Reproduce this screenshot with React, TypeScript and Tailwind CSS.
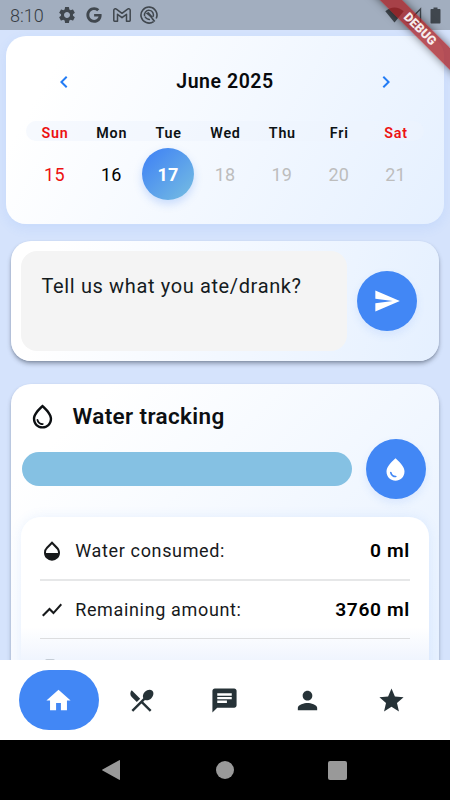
import React from "react";
import {
  MdSettings, MdChevronLeft, MdChevronRight, MdSend, MdOpacity, MdShowChart, MdHome,
  MdRestaurantMenu, MdChat, MdPerson, MdStar, MdOutlineWaterDrop, MdWaterDrop,
} from "react-icons/md";
import { FaGoogle } from "react-icons/fa";

const days = [
  { name: "Sun", date: 15, nameClass: "text-[#ec1212]", dateClass: "text-[#ec1212]" },
  { name: "Mon", date: 16, nameClass: "text-[#0c1214]", dateClass: "text-black" },
  { name: "Tue", date: 17, nameClass: "text-[#0c1214]", dateClass: "text-white font-bold" },
  { name: "Wed", date: 18, nameClass: "text-[#0c1214]", dateClass: "text-[#bdbdbd]" },
  { name: "Thu", date: 19, nameClass: "text-[#0c1214]", dateClass: "text-[#bdbdbd]" },
  { name: "Fri", date: 20, nameClass: "text-[#0c1214]", dateClass: "text-[#bdbdbd]" },
  { name: "Sat", date: 21, nameClass: "text-[#ec1212]", dateClass: "text-[#bdbdbd]" },
];

function StatusBar() {
  return (
    <div className="flex h-[30px] shrink-0 items-center bg-[#a2aebf] pl-[10px] pr-[8px] text-[#40474e]">
      <span className="w-[48px] pt-[2px] text-[18px] font-light leading-[30px] text-[#363c43]">8:10</span>
      <MdSettings size={20} className="-ml-[1px]" />
      <FaGoogle size={16} className="ml-[9px]" />
      <svg width="18" height="14" viewBox="0 0 18 14" className="ml-[11px]" fill="none" stroke="currentColor" strokeWidth="1.500" strokeLinejoin="round">
        <path d="M.8 2.3C.8.8 2.4.3 3.4 1.1L9 5.300l5.600-4.200c1-.8 2.600-.3 2.600 1.200v10.200c0 .4-.3.7-.7.7h-3V6.300L9 9.700 4.500 6.300v6.900h-3c-.4 0-.7-.3-.7-.7z" />
      </svg>
      <svg width="18" height="18" viewBox="0 0 18 18" className="ml-[9px]" fill="none" stroke="currentColor">
        <path d="M13.600 15.600A8 8 0 1 1 16.200 12.500" strokeWidth="1.600" />
        <path d="M4.600 10A4.500 4.500 0 1 1 12.900 11" strokeWidth="1.500" />
        <path d="M5.700 7.300 8.600 6.100l4.200 4.600-.8 2.200-2.900-2.800z" fill="currentColor" stroke="none" />
        <path d="M4.800 10.500Q6.500 13.500 10 13.600" strokeWidth="1.400" />
        <path d="m12 12.300 2.700 3.200" strokeWidth="1.700" />
      </svg>
      <div className="ml-auto flex items-center">
        <svg width="19" height="16" viewBox="0 0 19 16" fill="currentColor">
          <path d="M.3 4.300C5.500-.8 13.500-.8 18.700 4.300L9.500 15.500z" />
        </svg>
        <svg width="17" height="17" viewBox="0 0 17 17" className="ml-[2px]" fill="none" stroke="currentColor" strokeWidth="1.400">
          <path d="M14.500 2v13H1.800z" />
        </svg>
        <svg width="11" height="17" viewBox="0 0 11 17" className="ml-[7px] mr-[1px]" fill="currentColor">
          <path d="M3.500.4h4v1.700h2c.6 0 1 .4 1 1v12.400c0 .6-.4 1-1 1h-8c-.6 0-1-.4-1-1V3.100c0-.6.4-1 1-1h2z" />
        </svg>
      </div>
    </div>
  );
}

function Calendar() {
  return (
    <section className="mx-[6px] mt-[6px] h-[188px] shrink-0 rounded-[20px] bg-[linear-gradient(120deg,#ffffff_0%,#ffffff_12%,#e5f0ff_100%)] px-[20px] shadow-[0_4px_12px_rgba(66,133,244,0.10)]">
      <div className="flex h-[85px] items-center justify-between pl-[26px] pr-[26px] pt-[6px]">
        <MdChevronLeft size={24} className="text-[#237cf5]" />
        <h1 className="text-[19.500px] font-semibold tracking-[0.550px] text-[#080a0d]">June 2025</h1>
        <MdChevronRight size={24} className="text-[#237cf5]" />
      </div>
      <div className="grid h-[20px] grid-cols-7 items-center rounded-[10px] bg-[#edf4fe]/50">
        {days.map((d) => (
          <span key={d.name} className={"pl-px pt-[3px] text-center text-[14.300px] font-semibold leading-[19px] tracking-[0.750px] " + d.nameClass}>{d.name}</span>
        ))}
      </div>
      <div className="mt-[7px] grid grid-cols-7 justify-items-center">
        {days.map((d) => (
          <span
            key={d.date}
            className={
              "flex size-[52px] items-center justify-center rounded-full text-[18px] tracking-[0.2px] " + d.dateClass +
              (d.date === 17 ? " bg-[linear-gradient(135deg,#4285f4_10%,#74bbe2_95%)] shadow-[0_4px_8px_rgba(66,133,244,0.25)]" : "")
            }
          >
            {d.date}
          </span>
        ))}
      </div>
    </section>
  );
}

function MealInput() {
  return (
    <section className="mx-[11px] mt-[17px] flex h-[120px] shrink-0 items-center rounded-[20px] bg-[linear-gradient(105deg,#ffffff_10%,#e5f0ff_100%)] pl-[10px] shadow-[0_3px_4px_rgba(50,60,80,0.38),0_1px_2px_rgba(50,60,80,0.2)]">
      <div className="h-[100px] w-[326px] rounded-[16px] bg-[#f4f4f4] px-[20.500px] pt-[22px]">
        <span className="whitespace-nowrap text-[20px] leading-[26px] tracking-[0.630px] text-[#151b1e]">Tell us what you ate/drank?</span>
      </div>
      <button className="ml-[10.400px] flex size-[60px] items-center justify-center rounded-full bg-[#4287f5] text-white shadow-[0_4px_8px_rgba(66,133,244,0.12)]">
        <MdSend size={28} />
      </button>
    </section>
  );
}

function WaterCard() {
  return (
    <section className="mx-[11px] mt-[23px] h-[400px] shrink-0 rounded-[20px] bg-[linear-gradient(135deg,#ffffff_12%,#e5f0ff_90%)] px-[10px] shadow-[0_3px_4px_rgba(50,60,80,0.30),0_1px_2px_rgba(50,60,80,0.15)]">
      <div className="flex h-[55px] items-center pl-[7px] pt-[9px] text-[#0c0f12]">
        <MdOutlineWaterDrop size={29} />
        <h2 className="ml-[15.500px] pt-[2px] text-[22.500px] font-semibold tracking-[0.360px]">Water tracking</h2>
      </div>
      <div className="flex items-center">
        <div className="ml-px h-[34px] w-[330px] rounded-full bg-[#85c1e3]" />
        <button className="ml-[13.600px] flex size-[60px] items-center justify-center rounded-full bg-[#4287f5] text-white shadow-[0_4px_8px_rgba(66,133,244,0.12)]">
          <MdWaterDrop size={27} />
        </button>
      </div>
      <div className="mt-[18px] h-[250px] rounded-[20px] bg-[linear-gradient(#ffffff_0px,#ffffff_110px,#f0f5fe_143px)] px-[19px] pt-[5px] shadow-[0_0_12px_rgba(66,133,244,0.10)]">
        <div className="h-[59px] border-b-2 border-[#e6e7e8]">
          <Stat icon={<MdOpacity size={24} />} label="Water consumed:" value="0 ml" />
        </div>
        <div className="h-[58px] border-b border-[#dcdddf]">
          <Stat icon={<MdShowChart size={24} />} label="Remaining amount:" value="3760 ml" />
        </div>
        <div className="ml-[5px] mt-[20px] h-[20px] w-[10px] rounded-[2px] bg-[#c5cdd6]" />
      </div>
    </section>
  );
}

function Stat({ icon, label, value }: { icon: React.ReactNode; label: string; value: string }) {
  return (
    <div className="flex h-full items-center pt-px text-[#17191b]">
      {icon}
      <span className="-mt-px ml-[11.200px] text-[18px] tracking-[0.650px]">{label}</span>
      <span className="ml-auto pt-px text-[19.200px] font-semibold tracking-[0.650px] text-black">{value}</span>
    </div>
  );
}

function BottomNav() {
  const items = [MdRestaurantMenu, MdChat, MdPerson, MdStar];
  return (
    <nav className="flex h-[80px] shrink-0 items-center bg-white pl-[17px] pr-[16px] text-[#263237]">
      <div className="flex w-[83px] justify-center">
        <div className="flex h-[60px] w-[80px] items-center justify-center rounded-[30px] bg-[#4287f5] text-white">
          <MdHome size={29} />
        </div>
      </div>
      {items.map((Icon, i) => (
        <div key={i} className="flex w-[83.200px] justify-center">
          <Icon size={29} />
        </div>
      ))}
    </nav>
  );
}

function SystemNav() {
  return (
    <div className="flex h-[60px] shrink-0 items-center bg-black pl-[102px] text-[#999999]">
      <svg width="18" height="20" viewBox="0 0 18 20" fill="currentColor"><path d="M18 .7v18.600q0 .9-.8.500L.5 10.500q-.9-.5 0-1L17.200.2q.8-.4.8.5z" /></svg>
      <div className="ml-[96px] size-[18px] rounded-full bg-[#999999]" />
      <div className="ml-[94px] size-[19px] rounded-[2px] bg-[#999999]" />
    </div>
  );
}

export default function App() {
  return (
    <div className="relative flex h-[800px] w-[450px] flex-col overflow-hidden bg-[#d5e3fc] font-['Roboto',sans-serif]">
      <StatusBar />
      <main className="flex h-[630px] shrink-0 flex-col overflow-hidden">
        <Calendar />
        <MealInput />
        <WaterCard />
      </main>
      <BottomNav />
      <SystemNav />
      <div className="absolute left-[340px] top-[21px] flex h-[16px] w-[160px] rotate-45 items-center justify-center bg-[#a81c20]/75 text-[12.500px] font-black leading-none text-white/90 shadow-[0_0_8px_rgba(0,0,0,0.5)]">
        DEBUG
      </div>
    </div>
  );
}
